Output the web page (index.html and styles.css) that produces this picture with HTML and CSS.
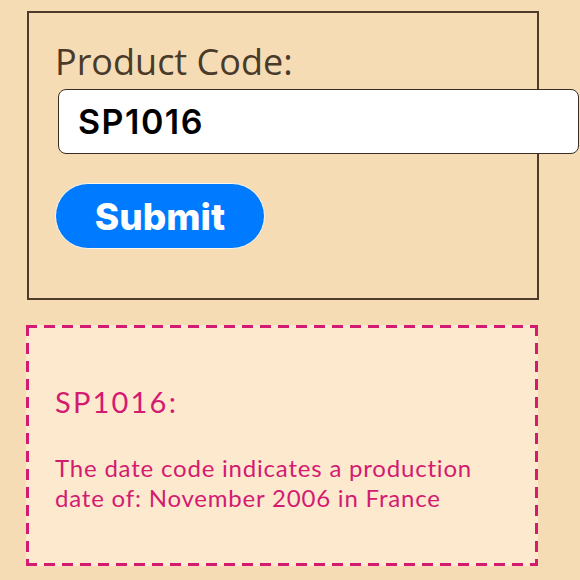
FILE: index.html
```html
<!DOCTYPE html>
<html>
<head>
<meta charset="utf-8">
<link rel="stylesheet" href="styles.css">
</head>
<body>
<div class="page">
  <form class="lookup">
    <label class="label" for="code">Product Code:</label>
    <input class="code-input" id="code" type="text" value="SP1016">
    <button class="submit" type="button">Submit</button>
  </form>
  <section class="result">
    <h2 class="result-title">SP1016:</h2>
    <p class="result-text">The date code indicates a production date of: November 2006 in France</p>
  </section>
</div>
</body>
</html>
```
FILE: styles.css
```css
html, body {
  margin: 0;
  padding: 0;
  background: #f5dcb4;
}
.page {
  padding: 11px 0 0 27px;
  width: 512px;
  display: flex;
  flex-direction: column;
  gap: 25px;
}
.lookup {
  box-sizing: border-box;
  height: 289px;
  border: 2px solid #4e3c2a;
  padding: 27px 0 0 26px;
  display: flex;
  flex-direction: column;
  align-items: flex-start;
}
.label {
  font-family: "Open Sans", sans-serif;
  font-size: 36px;
  color: #4a3a2a;
  line-height: 44px;
}
.code-input {
  box-sizing: border-box;
  margin: 5px 0 0 3px;
  width: 521px;
  height: 65px;
  border: 1.5px solid #3a2e24;
  border-radius: 8px;
  background: #fff;
  padding: 0 19px;
  font-family: Inter, sans-serif;
  font-weight: 600;
  font-size: 34px;
  letter-spacing: 1.5px;
  color: #000;
  outline: none;
}
.submit {
  box-sizing: border-box;
  margin-top: 29px;
  width: 210px;
  height: 66px;
  border: 1.5px solid #fff6e8;
  border-radius: 33px;
  background: #007bff;
  color: #fff;
  font-family: Inter, sans-serif;
  font-weight: 800;
  font-size: 37px;
  padding: 0;
}
.result {
  box-sizing: border-box;
  width: 512px;
  margin-left: -1px;
  height: 241px;
  background:
    linear-gradient(90deg, #d31b72 11px, transparent 11px) left top / 18px 3px repeat-x,
    linear-gradient(90deg, #d31b72 11px, transparent 11px) left bottom / 18px 3px repeat-x,
    linear-gradient(180deg, #d31b72 11px, transparent 11px) left top / 3px 18px repeat-y,
    linear-gradient(180deg, #d31b72 11px, transparent 11px) right top / 3px 18px repeat-y,
    #fde9ce;
  padding: 59px 0 0 29px;
  color: #d31b72;
  font-family: Lato, sans-serif;
}
.result-title {
  margin: 0;
  font-size: 29px;
  font-weight: 400;
  letter-spacing: 2.2px;
  line-height: 36px;
}
.result-text {
  margin: 33px 0 0;
  font-size: 24px;
  letter-spacing: 0.8px;
  line-height: 30px;
  width: 440px;
}
```
